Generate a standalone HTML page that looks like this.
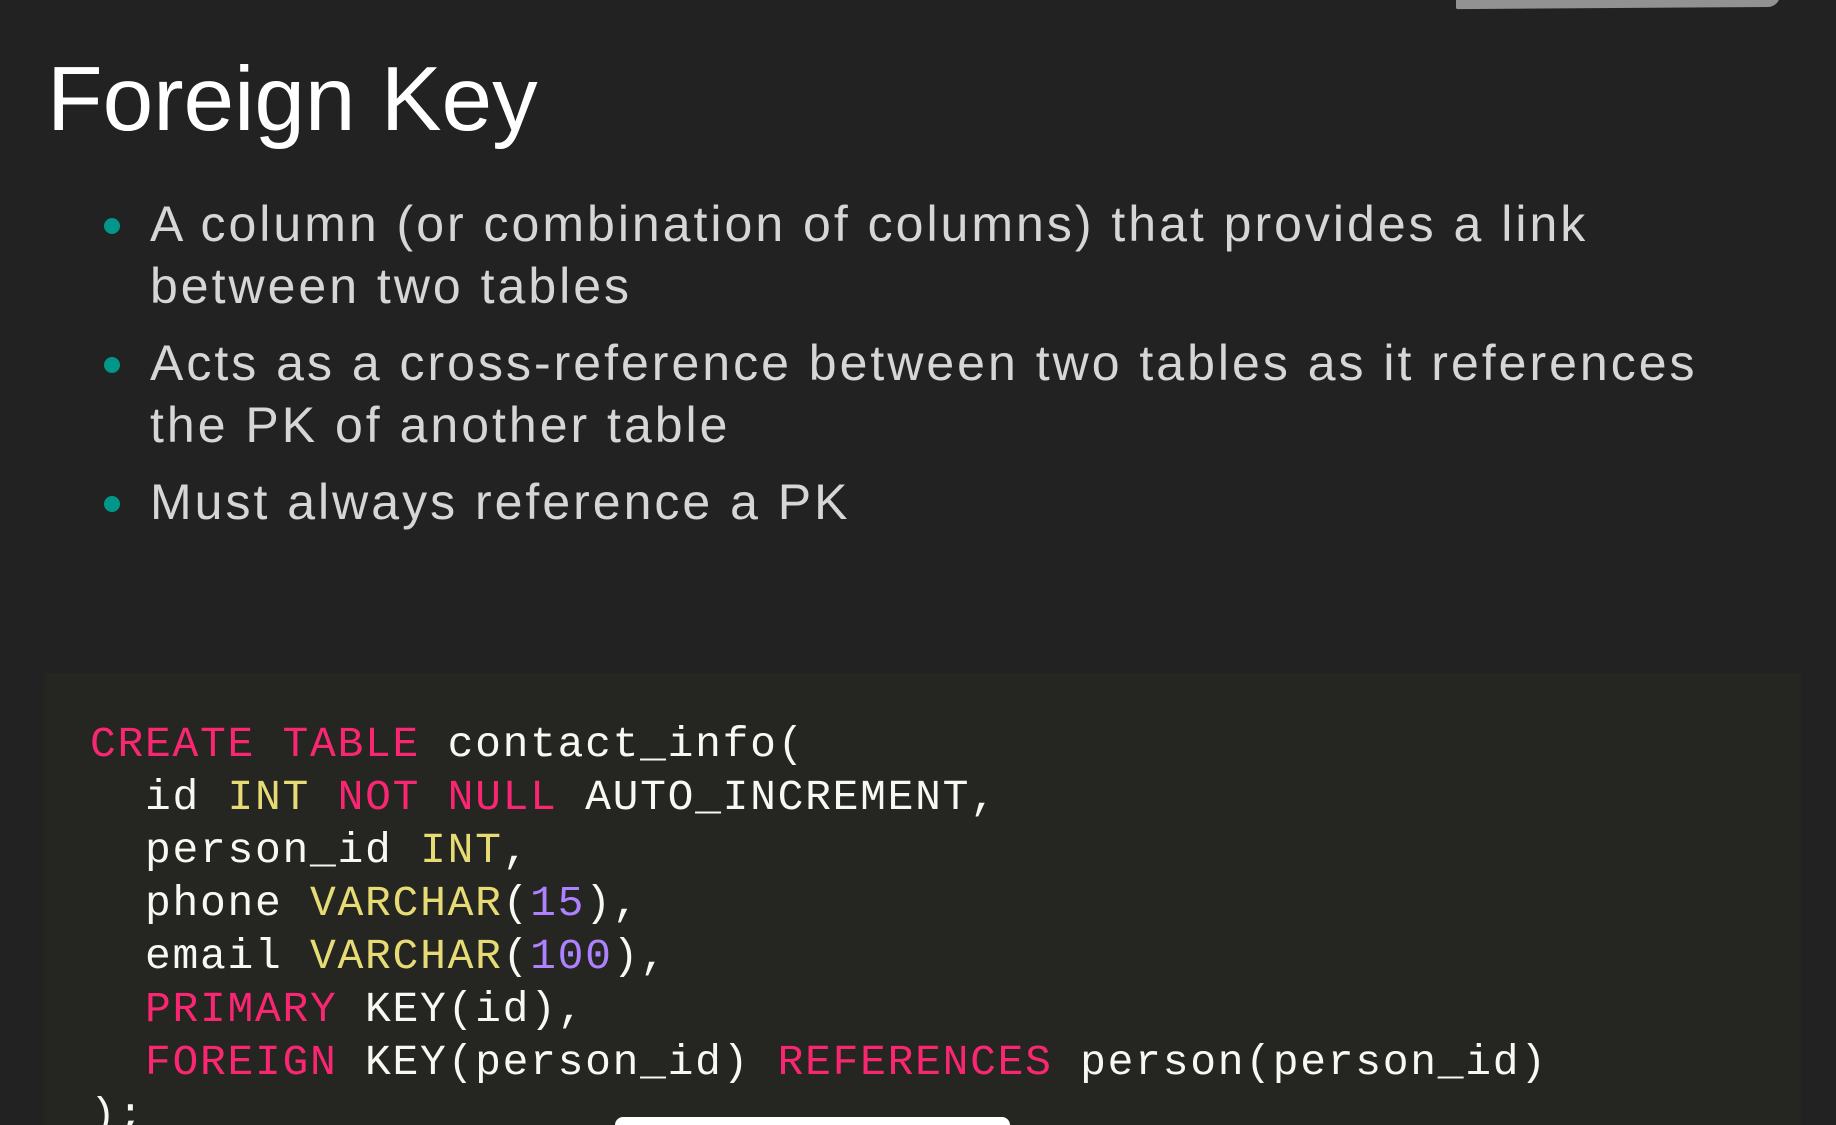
<!DOCTYPE html>
<html><head><meta charset="utf-8"><style>
html,body{margin:0;padding:0;width:1836px;height:1125px;overflow:hidden;}
body{background:#222222;position:relative;font-family:"Liberation Sans",sans-serif;}
.t{position:absolute;left:47px;top:54px;font-size:91px;color:#fff;line-height:1;white-space:nowrap;}
.b{position:absolute;left:150px;font-size:50px;letter-spacing:3px;color:#d6d6d6;line-height:62px;white-space:nowrap;}
.dot{position:absolute;left:104px;width:16px;height:16px;border-radius:50%;background:#00968a;}
.code{position:absolute;left:44px;top:673px;width:1757px;height:452px;background:#252521;}
pre{position:absolute;left:90px;top:718px;margin:0;font-family:"Liberation Mono",monospace;font-size:43px;letter-spacing:1.7px;line-height:53px;color:#f8f8f2;}
.k{color:#f92672}.y{color:#e6db74}.n{color:#ae81ff}
.pill{position:absolute;left:615px;top:1117px;width:395px;height:8px;border-radius:18px 18px 0 0;background:#fff;}
.brush{position:absolute;left:1456px;top:-4px;width:324px;height:12px;background:#929292;border-radius:0 0 40px 6px;transform:rotate(-0.4deg);}
</style></head><body>
<div class="brush"></div>
<div class="t">Foreign Key</div>
<div class="dot" style="top:218px"></div>
<div class="b" style="top:193px">A column (or combination of columns) that provides a link<br>between two tables</div>
<div class="dot" style="top:357px"></div>
<div class="b" style="top:332px">Acts as a cross-reference between two tables as it references<br>the PK of another table</div>
<div class="dot" style="top:496px"></div>
<div class="b" style="top:471px">Must always reference a PK</div>
<div class="code"></div>
<pre><span class="k">CREATE TABLE</span> contact_info(
  id <span class="y">INT</span> <span class="k">NOT NULL</span> AUTO_INCREMENT,
  person_id <span class="y">INT</span>,
  phone <span class="y">VARCHAR</span>(<span class="n">15</span>),
  email <span class="y">VARCHAR</span>(<span class="n">100</span>),
  <span class="k">PRIMARY</span> KEY(id),
  <span class="k">FOREIGN</span> KEY(person_id) <span class="k">REFERENCES</span> person(person_id)
);</pre>
<div class="pill"></div>
</body></html>
